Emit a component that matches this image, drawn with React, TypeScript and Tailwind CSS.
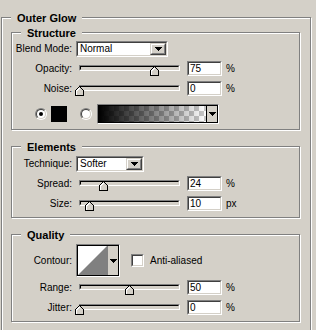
import React from "react";

function Legend({ text }: { text: string }) {
  return (
    <div className="absolute top-[-6px] left-[9px] px-[6px] bg-[#d4d0c8] font-bold text-[11px] leading-[13px] text-black">
      {text}
    </div>
  );
}

function Arrow() {
  return (
    <svg width="7" height="4" viewBox="0 0 7 4" shapeRendering="crispEdges">
      <path d="M0 0 H7 L3.5 4 Z" fill="#000" />
    </svg>
  );
}

function Sunken({ className, inner, children }: { className: string; inner: string; children?: React.ReactNode }) {
  return (
    <div className={"border border-t-[#808080] border-l-[#808080] border-b-white border-r-white " + className}>
      <div className={"w-full h-full " + inner}>{children}</div>
    </div>
  );
}

function Dropdown({ className, text }: { className: string; text: string }) {
  return (
    <Sunken
      className={className}
      inner="border border-t-[#404040] border-l-[#404040] border-b-[#d4d0c8] border-r-[#d4d0c8] bg-white flex items-stretch"
    >
      <div className="flex-1 pl-[2px] flex items-center text-[10px] leading-none">{text}</div>
      <div className="w-[16px] border border-t-[#d4d0c8] border-l-[#d4d0c8] border-b-[#404040] border-r-[#404040]">
        <div className="w-full h-full border border-t-white border-l-white border-b-[#808080] border-r-[#808080] bg-[#d4d0c8] flex items-center justify-center">
          <Arrow />
        </div>
      </div>
    </Sunken>
  );
}

function Slider({ value }: { value: number }) {
  return (
    <div className="relative w-[108px] h-[15px] ml-[3px]">
      <div className="ml-[4px] mt-[4px] w-[101px] h-[6px] border border-t-[#808080] border-l-[#808080] border-b-white border-r-white">
        <div className="w-full h-full border border-t-[#000] border-l-[#000] border-b-[#d4d0c8] border-r-[#d4d0c8] bg-[#d4d0c8]" />
      </div>
      <svg
        className="absolute top-[5px]"
        style={{ left: value }}
        width="9"
        height="10"
        viewBox="0 0 9 10"
        shapeRendering="crispEdges"
      >
        <path d="M0.5 9.5 V4.5 L4.5 0.5 L8.5 4.5 V9.5 Z" fill="#d4d0c8" stroke="#000" />
        <path d="M1.5 8.5 V4.9 L4.5 1.9" stroke="#fff" fill="none" />
      </svg>
    </div>
  );
}

function NumInput({ value }: { value: string }) {
  return (
    <Sunken
      className="ml-[4px] w-[35px] h-[15px]"
      inner="border border-t-[#404040] border-l-[#404040] border-b-[#d4d0c8] border-r-[#d4d0c8] bg-white flex items-center pl-[1px] text-[10px] leading-none"
    >
      {value}
    </Sunken>
  );
}

function Label({ text }: { text: string }) {
  return <div className="w-[60px] text-right text-[10px] leading-none">{text}</div>;
}

function SliderRow({ label, value, unit, className }: { label: string; value: number; unit: string; className: string }) {
  return (
    <div className={"flex items-center h-[15px] " + className}>
      <Label text={label} />
      <Slider value={value} />
      <NumInput value={String(value)} />
      <div className="ml-[4px] text-[10px] leading-none">{unit}</div>
    </div>
  );
}

function Radio({ checked }: { checked?: boolean }) {
  return (
    <div className="w-[12px] h-[12px] rounded-full border border-t-[#808080] border-l-[#808080] border-b-white border-r-white">
      <div className="w-full h-full rounded-full border border-t-[#404040] border-l-[#404040] border-b-[#d4d0c8] border-r-[#d4d0c8] bg-white flex items-center justify-center">
        {checked && <div className="w-[4px] h-[4px] rounded-full bg-black" />}
      </div>
    </div>
  );
}

const frame =
  "relative border border-[#808080] shadow-[inset_1px_1px_0_#ffffff,1px_1px_0_#ffffff]";

export default function App() {
  return (
    <div className="w-[316px] h-[330px] overflow-hidden bg-[#d4d0c8] pt-[17px] pl-[1px] text-black font-['Liberation_Sans',Arial,sans-serif]">
      <div className={frame + " w-[310px] h-[340px]"}>
        <Legend text="Outer Glow" />

        {/* Structure */}
        <div className={frame + " ml-[9px] mt-[14px] w-[289px] h-[98px]"}>
          <Legend text="Structure" />
          <div className="flex items-center h-[16px] mt-[8px]">
            <Label text="Blend Mode:" />
            <Dropdown className="ml-[4px] w-[92px] h-[16px]" text="Normal" />
          </div>
          <SliderRow label="Opacity:" value={75} unit="%" className="mt-[4px]" />
          <SliderRow label="Noise:" value={0} unit="%" className="mt-[5px]" />
          <div className="flex items-center h-[20px] mt-[8px]">
            <div className="ml-[23px]">
              <Radio checked />
            </div>
            <div className="ml-[4px] w-[16px] h-[16px] bg-black" />
            <div className="ml-[13px]">
              <Radio />
            </div>
            <Sunken
              className="ml-[5px] w-[122px] h-[20px]"
              inner="border border-black flex items-stretch"
            >
              <div className="flex-1 bg-[conic-gradient(#c8c8c8_25%,#ffffff_0_50%,#c8c8c8_0_75%,#ffffff_0)] bg-[length:10px_10px]">
                <div className="w-full h-full bg-linear-to-r from-black to-transparent" />
              </div>
              <div className="w-[11px] border-l border-black bg-[#d4d0c8] flex items-center justify-center">
                <Arrow />
              </div>
            </Sunken>
          </div>
        </div>

        {/* Elements */}
        <div className={frame + " ml-[9px] mt-[16px] w-[289px] h-[72px]"}>
          <Legend text="Elements" />
          <div className="flex items-center h-[16px] mt-[9px]">
            <Label text="Technique:" />
            <Dropdown className="ml-[4px] w-[68px] h-[16px]" text="Softer" />
          </div>
          <SliderRow label="Spread:" value={24} unit="%" className="mt-[4px]" />
          <SliderRow label="Size:" value={10} unit="px" className="mt-[5px]" />
        </div>

        {/* Quality */}
        <div className={frame + " ml-[9px] mt-[16px] w-[289px] h-[88px]"}>
          <Legend text="Quality" />
          <div className="flex items-center h-[33px] mt-[9px]">
            <Label text="Contour:" />
            <Sunken
              className="ml-[4px] w-[44px] h-[33px]"
              inner="border border-black flex items-stretch"
            >
              <div className="flex-1 bg-white">
                <svg width="100%" height="100%" viewBox="0 0 28 29" preserveAspectRatio="none">
                  <path d="M0 29 L28 0 L28 29 Z" fill="#808080" />
                </svg>
              </div>
              <div className="w-[11px] border-l border-[#808080] bg-[#d4d0c8] flex items-center justify-center">
                <Arrow />
              </div>
            </Sunken>
            <Sunken
              className="ml-[11px] w-[13px] h-[13px]"
              inner="border border-t-[#404040] border-l-[#404040] border-b-[#d4d0c8] border-r-[#d4d0c8] bg-white"
            />
            <div className="ml-[6px] text-[10px] leading-none">Anti-aliased</div>
          </div>
          <SliderRow label="Range:" value={50} unit="%" className="mt-[3px]" />
          <SliderRow label="Jitter:" value={0} unit="%" className="mt-[5px]" />
        </div>
      </div>
    </div>
  );
}
